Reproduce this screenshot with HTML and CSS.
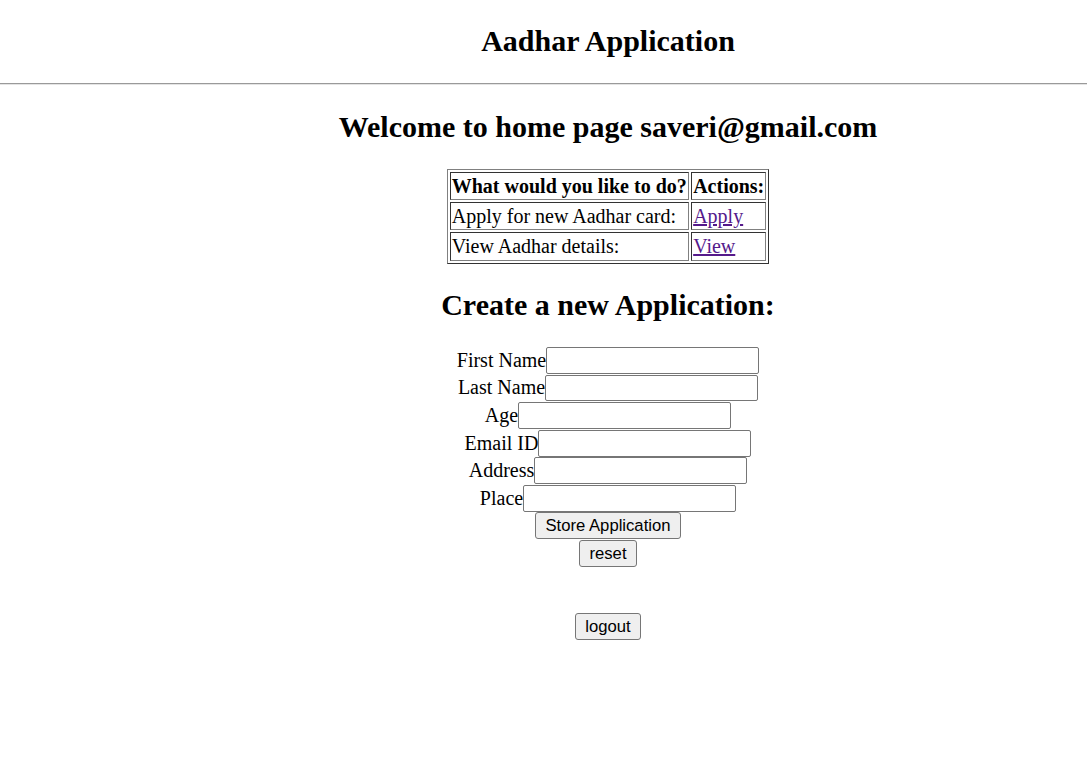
FILE: index.html
```html
<!DOCTYPE html>
<html>
<head>
<meta charset="utf-8">
<title>Aadhar Application</title>
<link rel="stylesheet" href="styles.css">
</head>
<body>
<header class="site-header">
  <h2 class="title">Aadhar Application</h2>
</header>
<hr class="divider">
<main class="content">
  <h2 class="welcome">Welcome to home page saveri@gmail.com</h2>
  <table class="actions">
    <tr>
      <th>What would you like to do?</th>
      <th>Actions:</th>
    </tr>
    <tr>
      <td>Apply for new Aadhar card:</td>
      <td><a href="#" class="link">Apply</a></td>
    </tr>
    <tr>
      <td>View Aadhar details:</td>
      <td><a href="#" class="link">View</a></td>
    </tr>
  </table>
  <h2 class="create">Create a new Application:</h2>
  <form class="app-form">
    <div class="row"><label class="lbl">First Name</label><input class="field" type="text"></div>
    <div class="row"><label class="lbl">Last Name</label><input class="field" type="text"></div>
    <div class="row"><label class="lbl">Age</label><input class="field" type="text"></div>
    <div class="row"><label class="lbl">Email ID</label><input class="field" type="text"></div>
    <div class="row"><label class="lbl">Address</label><input class="field" type="text"></div>
    <div class="row"><label class="lbl">Place</label><input class="field" type="text"></div>
    <div class="row"><button class="btn" type="button">Store Application</button></div>
    <div class="row"><button class="btn" type="reset">reset</button></div>
  </form>
  <div class="row logout-row"><button class="btn" type="button">logout</button></div>
</main>
</body>
</html>
```
FILE: styles.css
```css
html, body {
  margin: 0;
  padding: 0;
  background: #ffffff;
}

body {
  font-family: "Liberation Serif", "Times New Roman", serif;
  font-size: 20px;
  color: #000000;
}

.site-header {
  padding-left: 129px;
  text-align: center;
}

.title {
  font-size: 30px;
  font-weight: bold;
  margin: 24px 0 25px 0;
  line-height: normal;
}

.divider {
  margin: 0;
  height: 0;
  border: 0;
  border-top: 1px solid #9a9a9a;
  border-bottom: 1px solid #e4e4e4;
}

.content {
  padding-left: 129px;
  text-align: center;
}

.welcome,
.create {
  font-size: 30px;
  font-weight: bold;
  margin: 25px 0 25px 0;
  line-height: normal;
}

.create {
  margin: 24px 0 25px 0;
}

.actions {
  margin: 0 auto;
  border-collapse: separate;
  border-spacing: 2.5px;
  border-width: 1px;
  border-style: solid;
  border-color: #808080 #333333 #333333 #808080;
  text-align: left;
}

.actions th,
.actions td {
  border-width: 1px;
  border-style: solid;
  border-color: #333333 #808080 #808080 #333333;
  padding: 1.6px 1.2px 1.6px 1.2px;
  line-height: normal;
  font-size: 20px;
}

.actions th {
  font-weight: bold;
  text-align: left;
}

.link {
  color: #551a8b;
  text-decoration: underline;
}

.app-form {
  margin: 0;
}

.row {
  display: flex;
  justify-content: center;
  align-items: center;
  height: 27.6px;
}

.lbl {
  font-size: 20px;
  line-height: normal;
}

.field {
  box-sizing: border-box;
  width: 213px;
  height: 26.8px;
  margin: 0;
  padding: 1px 2px;
  border: 1px solid #767676;
  border-radius: 2px;
  background: #ffffff;
  font-family: "Liberation Sans", Arial, sans-serif;
  font-size: 16.67px;
}

.btn {
  box-sizing: border-box;
  height: 27px;
  margin: 0;
  padding: 0 9px;
  border: 1px solid #767676;
  border-radius: 3px;
  background: #efefef;
  color: #000000;
  font-family: "Liberation Sans", Arial, sans-serif;
  font-size: 16.67px;
  line-height: normal;
}

.logout-row {
  margin-top: 45.6px;
}
```
